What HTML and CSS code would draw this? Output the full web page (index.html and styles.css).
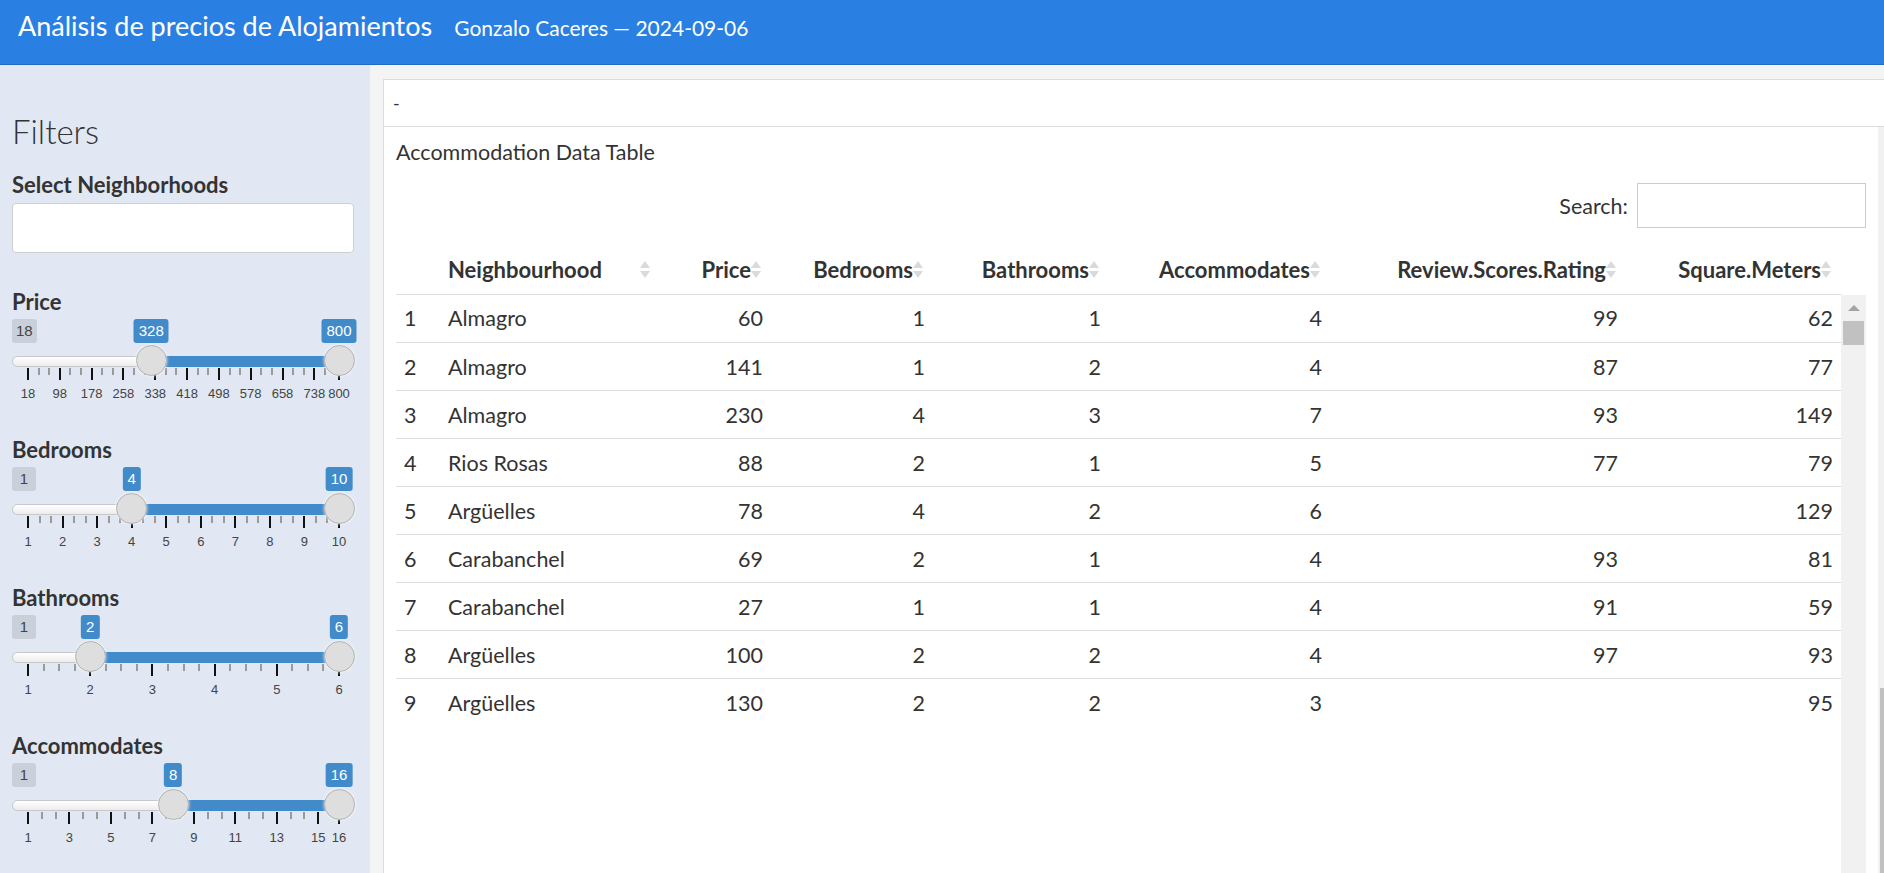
FILE: index.html
```html
<!DOCTYPE html>
<html lang="es">
<head>
<meta charset="utf-8">
<title>Análisis de precios de Alojamientos</title>
<link rel="stylesheet" href="styles.css">
</head>
<body>
<header class="topbar">
  <span class="app-title">Análisis de precios de Alojamientos</span>
  <span class="app-sub">Gonzalo Caceres — 2024-09-06</span>
</header>
<div class="layout">
  <aside class="sidebar">
    <h2 class="side-title">Filters</h2>
    <div class="field">
      <label class="field-label">Select Neighborhoods</label>
      <div class="select-box"></div>
    </div>

    <div class="field slider-field">
      <label class="field-label">Price</label>
      <div class="irs">
        <span class="irs-min">18</span>
        <div class="irs-line"></div>
        <div class="irs-scale">
          <i class="tk" style="left:0%"></i><i class="tk sm" style="left:3.410%"></i><i class="tk sm" style="left:6.820%"></i>
          <i class="tk" style="left:10.230%"></i><i class="tk sm" style="left:13.640%"></i><i class="tk sm" style="left:17.050%"></i>
          <i class="tk" style="left:20.460%"></i><i class="tk sm" style="left:23.870%"></i><i class="tk sm" style="left:27.280%"></i>
          <i class="tk" style="left:30.691%"></i><i class="tk sm" style="left:34.101%"></i><i class="tk sm" style="left:37.511%"></i>
          <i class="tk" style="left:40.921%"></i><i class="tk sm" style="left:44.331%"></i><i class="tk sm" style="left:47.741%"></i>
          <i class="tk" style="left:51.151%"></i><i class="tk sm" style="left:54.561%"></i><i class="tk sm" style="left:57.971%"></i>
          <i class="tk" style="left:61.381%"></i><i class="tk sm" style="left:64.791%"></i><i class="tk sm" style="left:68.201%"></i>
          <i class="tk" style="left:71.611%"></i><i class="tk sm" style="left:75.021%"></i><i class="tk sm" style="left:78.431%"></i>
          <i class="tk" style="left:81.841%"></i><i class="tk sm" style="left:85.251%"></i><i class="tk sm" style="left:88.662%"></i>
          <i class="tk" style="left:92.072%"></i><i class="tk sm" style="left:95.482%"></i>
          <i class="tk" style="left:100%"></i>
          <b class="tl" style="left:0%">18</b><b class="tl" style="left:10.230%">98</b><b class="tl" style="left:20.460%">178</b>
          <b class="tl" style="left:30.691%">258</b><b class="tl" style="left:40.921%">338</b><b class="tl" style="left:51.151%">418</b>
          <b class="tl" style="left:61.381%">498</b><b class="tl" style="left:71.611%">578</b><b class="tl" style="left:81.841%">658</b>
          <b class="tl" style="left:92.072%">738</b><b class="tl" style="left:100%">800</b>
          <div class="irs-bar" style="left:39.642%;width:60.358%"></div>
          <span class="irs-handle" style="left:39.642%"></span>
          <span class="irs-handle" style="left:100%"></span>
          <span class="irs-bubble" style="left:39.642%">328</span>
          <span class="irs-bubble" style="left:100%">800</span>
        </div>
      </div>
    </div>

    <div class="field slider-field">
      <label class="field-label">Bedrooms</label>
      <div class="irs">
        <span class="irs-min">1</span>
        <div class="irs-line"></div>
        <div class="irs-scale">
          <i class="tk" style="left:0%"></i><i class="tk sm" style="left:3.704%"></i><i class="tk sm" style="left:7.407%"></i>
          <i class="tk" style="left:11.111%"></i><i class="tk sm" style="left:14.815%"></i><i class="tk sm" style="left:18.519%"></i>
          <i class="tk" style="left:22.222%"></i><i class="tk sm" style="left:25.926%"></i><i class="tk sm" style="left:29.630%"></i>
          <i class="tk" style="left:33.333%"></i><i class="tk sm" style="left:37.037%"></i><i class="tk sm" style="left:40.741%"></i>
          <i class="tk" style="left:44.444%"></i><i class="tk sm" style="left:48.148%"></i><i class="tk sm" style="left:51.852%"></i>
          <i class="tk" style="left:55.556%"></i><i class="tk sm" style="left:59.259%"></i><i class="tk sm" style="left:62.963%"></i>
          <i class="tk" style="left:66.667%"></i><i class="tk sm" style="left:70.370%"></i><i class="tk sm" style="left:74.074%"></i>
          <i class="tk" style="left:77.778%"></i><i class="tk sm" style="left:81.481%"></i><i class="tk sm" style="left:85.185%"></i>
          <i class="tk" style="left:88.889%"></i><i class="tk sm" style="left:92.593%"></i><i class="tk sm" style="left:96.296%"></i>
          <i class="tk" style="left:100%"></i>
          <b class="tl" style="left:0%">1</b><b class="tl" style="left:11.111%">2</b><b class="tl" style="left:22.222%">3</b>
          <b class="tl" style="left:33.333%">4</b><b class="tl" style="left:44.444%">5</b><b class="tl" style="left:55.556%">6</b>
          <b class="tl" style="left:66.667%">7</b><b class="tl" style="left:77.778%">8</b><b class="tl" style="left:88.889%">9</b>
          <b class="tl" style="left:100%">10</b>
          <div class="irs-bar" style="left:33.333%;width:66.667%"></div>
          <span class="irs-handle" style="left:33.333%"></span>
          <span class="irs-handle" style="left:100%"></span>
          <span class="irs-bubble" style="left:33.333%">4</span>
          <span class="irs-bubble" style="left:100%">10</span>
        </div>
      </div>
    </div>

    <div class="field slider-field">
      <label class="field-label">Bathrooms</label>
      <div class="irs">
        <span class="irs-min">1</span>
        <div class="irs-line"></div>
        <div class="irs-scale">
          <i class="tk" style="left:0%"></i><i class="tk sm" style="left:5%"></i><i class="tk sm" style="left:10%"></i><i class="tk sm" style="left:15%"></i>
          <i class="tk" style="left:20%"></i><i class="tk sm" style="left:25%"></i><i class="tk sm" style="left:30%"></i><i class="tk sm" style="left:35%"></i>
          <i class="tk" style="left:40%"></i><i class="tk sm" style="left:45%"></i><i class="tk sm" style="left:50%"></i><i class="tk sm" style="left:55%"></i>
          <i class="tk" style="left:60%"></i><i class="tk sm" style="left:65%"></i><i class="tk sm" style="left:70%"></i><i class="tk sm" style="left:75%"></i>
          <i class="tk" style="left:80%"></i><i class="tk sm" style="left:85%"></i><i class="tk sm" style="left:90%"></i><i class="tk sm" style="left:95%"></i>
          <i class="tk" style="left:100%"></i>
          <b class="tl" style="left:0%">1</b><b class="tl" style="left:20%">2</b><b class="tl" style="left:40%">3</b>
          <b class="tl" style="left:60%">4</b><b class="tl" style="left:80%">5</b><b class="tl" style="left:100%">6</b>
          <div class="irs-bar" style="left:20%;width:80%"></div>
          <span class="irs-handle" style="left:20%"></span>
          <span class="irs-handle" style="left:100%"></span>
          <span class="irs-bubble" style="left:20%">2</span>
          <span class="irs-bubble" style="left:100%">6</span>
        </div>
      </div>
    </div>

    <div class="field slider-field last">
      <label class="field-label">Accommodates</label>
      <div class="irs">
        <span class="irs-min">1</span>
        <div class="irs-line"></div>
        <div class="irs-scale">
          <i class="tk" style="left:0%"></i><i class="tk sm" style="left:4.444%"></i><i class="tk sm" style="left:8.889%"></i>
          <i class="tk" style="left:13.333%"></i><i class="tk sm" style="left:17.778%"></i><i class="tk sm" style="left:22.222%"></i>
          <i class="tk" style="left:26.667%"></i><i class="tk sm" style="left:31.111%"></i><i class="tk sm" style="left:35.556%"></i>
          <i class="tk" style="left:40%"></i><i class="tk sm" style="left:44.444%"></i><i class="tk sm" style="left:48.889%"></i>
          <i class="tk" style="left:53.333%"></i><i class="tk sm" style="left:57.778%"></i><i class="tk sm" style="left:62.222%"></i>
          <i class="tk" style="left:66.667%"></i><i class="tk sm" style="left:71.111%"></i><i class="tk sm" style="left:75.556%"></i>
          <i class="tk" style="left:80%"></i><i class="tk sm" style="left:84.444%"></i><i class="tk sm" style="left:88.889%"></i>
          <i class="tk" style="left:93.333%"></i>
          <i class="tk" style="left:100%"></i>
          <b class="tl" style="left:0%">1</b><b class="tl" style="left:13.333%">3</b><b class="tl" style="left:26.667%">5</b>
          <b class="tl" style="left:40%">7</b><b class="tl" style="left:53.333%">9</b><b class="tl" style="left:66.667%">11</b>
          <b class="tl" style="left:80%">13</b><b class="tl" style="left:93.333%">15</b><b class="tl" style="left:100%">16</b>
          <div class="irs-bar" style="left:46.667%;width:53.333%"></div>
          <span class="irs-handle" style="left:46.667%"></span>
          <span class="irs-handle" style="left:100%"></span>
          <span class="irs-bubble" style="left:46.667%">8</span>
          <span class="irs-bubble" style="left:100%">16</span>
        </div>
      </div>
    </div>
  </aside>

  <main class="main">
    <section class="card">
      <div class="card-header">-</div>
      <div class="card-body">
        <div class="card-content">
          <div class="tbl-caption">Accommodation Data Table</div>
          <div class="dt-search">
            <label for="q">Search:</label>
            <input id="q" class="search-input" type="search">
          </div>
          <div class="dt-head">
            <table class="dt">
              <colgroup>
                <col class="c-idx"><col class="c-nb"><col class="c-price"><col class="c-bed"><col class="c-bath"><col class="c-acc"><col class="c-rev"><col class="c-sqm">
              </colgroup>
              <thead>
                <tr>
                  <th></th>
                  <th class="left"><span class="th-in spread"><span>Neighbourhood</span><span class="sort"></span></span></th>
                  <th><span class="th-in"><span>Price</span><span class="sort"></span></span></th>
                  <th><span class="th-in"><span>Bedrooms</span><span class="sort"></span></span></th>
                  <th><span class="th-in"><span>Bathrooms</span><span class="sort"></span></span></th>
                  <th><span class="th-in"><span>Accommodates</span><span class="sort"></span></span></th>
                  <th><span class="th-in"><span>Review.Scores.Rating</span><span class="sort"></span></span></th>
                  <th><span class="th-in"><span>Square.Meters</span><span class="sort"></span></span></th>
                </tr>
              </thead>
            </table>
          </div>
          <div class="dt-body">
            <table class="dt">
              <colgroup>
                <col class="c-idx"><col class="c-nb"><col class="c-price"><col class="c-bed"><col class="c-bath"><col class="c-acc"><col class="c-rev"><col class="c-sqm">
              </colgroup>
              <tbody>
                <tr><td class="left">1</td><td class="left">Almagro</td><td>60</td><td>1</td><td>1</td><td>4</td><td>99</td><td>62</td></tr>
                <tr><td class="left">2</td><td class="left">Almagro</td><td>141</td><td>1</td><td>2</td><td>4</td><td>87</td><td>77</td></tr>
                <tr><td class="left">3</td><td class="left">Almagro</td><td>230</td><td>4</td><td>3</td><td>7</td><td>93</td><td>149</td></tr>
                <tr><td class="left">4</td><td class="left">Rios Rosas</td><td>88</td><td>2</td><td>1</td><td>5</td><td>77</td><td>79</td></tr>
                <tr><td class="left">5</td><td class="left">Argüelles</td><td>78</td><td>4</td><td>2</td><td>6</td><td></td><td>129</td></tr>
                <tr><td class="left">6</td><td class="left">Carabanchel</td><td>69</td><td>2</td><td>1</td><td>4</td><td>93</td><td>81</td></tr>
                <tr><td class="left">7</td><td class="left">Carabanchel</td><td>27</td><td>1</td><td>1</td><td>4</td><td>91</td><td>59</td></tr>
                <tr><td class="left">8</td><td class="left">Argüelles</td><td>100</td><td>2</td><td>2</td><td>4</td><td>97</td><td>93</td></tr>
                <tr class="last"><td class="left">9</td><td class="left">Argüelles</td><td>130</td><td>2</td><td>2</td><td>3</td><td></td><td>95</td></tr>
              </tbody>
            </table>
            <div class="vscroll">
              <span class="vscroll-up"></span>
              <span class="vscroll-thumb"></span>
            </div>
          </div>
        </div>
        <div class="page-scroll"><span class="page-thumb"></span></div>
      </div>
    </section>
  </main>
</div>
</body>
</html>
```

FILE: styles.css
```css
* { box-sizing: border-box; margin: 0; padding: 0; }

html, body { height: 100%; }

body {
  font-family: Lato, "Noto Sans", sans-serif;
  color: #333;
  background: #f4f4f4;
  overflow: hidden;
  display: flex;
  flex-direction: column;
}

/* ---------- top bar ---------- */
.topbar {
  flex: none;
  height: 65px;
  background: #2a80e2;
  border-bottom: 1px solid #1f6cc4;
  color: #fff;
  display: flex;
  align-items: baseline;
  gap: 22px;
  padding: 11px 0 0 18px;
}
.app-title { font-size: 27px; line-height: 30px; }
.app-sub { font-size: 21px; line-height: 24px; }

/* ---------- layout ---------- */
.layout { flex: 1; display: flex; min-height: 0; overflow: hidden; }

.sidebar {
  flex: none;
  width: 370px;
  background: #e1e8f3;
  padding: 46px 16px 0 12px;
  overflow: hidden;
}
.side-title {
  font-weight: 300;
  font-size: 33px;
  line-height: 41px;
  margin-bottom: 20px;
  color: #333;
}
.field { margin-bottom: 36px; }
.field-label {
  display: block;
  font-weight: 700;
  font-size: 22px;
  line-height: 25px;
  margin-bottom: 6px;
}
.select-box {
  height: 50px;
  background: #fff;
  border: 1px solid #cfcfcf;
  border-radius: 4px;
}
.slider-field { margin-bottom: 33px; }
.slider-field.last { margin-bottom: 0; }
.slider-field .field-label { margin-bottom: 5px; }

/* ---------- range slider ---------- */
.irs { position: relative; height: 85px; }
.irs-min {
  position: absolute;
  left: 0; top: 0;
  height: 24px;
  line-height: 24px;
  padding: 0 4px;
  min-width: 24px;
  text-align: center;
  background: rgba(0, 0, 0, 0.1);
  border-radius: 3px;
  font-family: "Liberation Sans", Arial, sans-serif;
  font-size: 15px;
  color: #444;
}
.irs-line {
  position: absolute;
  left: 0; right: 0;
  top: 37px;
  height: 11px;
  border: 1px solid #c8c8c8;
  border-radius: 6px;
  background: linear-gradient(#ffffff, #ececec);
}
.irs-scale {
  position: absolute;
  left: 16px; right: 15px;
  top: 0; bottom: 0;
}
.irs-bar {
  position: absolute;
  top: 37px;
  height: 11px;
  background: #428bca;
}
.irs-handle {
  position: absolute;
  top: 26px;
  width: 31px; height: 31px;
  margin-left: -15.5px;
  border-radius: 50%;
  background: #dedede;
  border: 1px solid #b3b3b3;
  box-shadow: 0 0 3px rgba(255,255,255,0.8);
}
.irs-bubble {
  position: absolute;
  top: 0;
  height: 24px;
  line-height: 24px;
  padding: 0 5px;
  transform: translateX(-50%);
  background: #428bca;
  color: #fff;
  border-radius: 3px;
  font-family: "Liberation Sans", Arial, sans-serif;
  font-size: 15px;
  white-space: nowrap;
}
.tk {
  position: absolute;
  top: 49px;
  width: 2px;
  height: 12px;
  margin-left: -1px;
  background: #111;
}
.tk.sm { height: 7px; background: #9a9a9a; }
.tl {
  position: absolute;
  top: 67px;
  transform: translateX(-50%);
  font-family: "Liberation Sans", Arial, sans-serif;
  font-weight: 400;
  font-size: 13px;
  line-height: 16px;
  color: #444;
  white-space: nowrap;
}

/* ---------- main ---------- */
.main {
  flex: 1;
  min-width: 0;
  padding: 14px 0 0 13px;
  display: flex;
}
.card {
  flex: 1;
  min-width: 0;
  background: #fff;
  border: 1px solid #dcdcdc;
  border-right: none;
  border-bottom: none;
  display: flex;
  flex-direction: column;
}
.card-header {
  flex: none;
  height: 47px;
  line-height: 46px;
  padding: 0 9px;
  font-size: 18px;
  border-bottom: 1px solid #dcdcdc;
}
.card-body { flex: 1; display: flex; min-height: 0; }
.card-content {
  flex: 1;
  min-width: 0;
  padding: 12px 12px 0 12px;
  display: flex;
  flex-direction: column;
}
.tbl-caption { font-size: 21.5px; line-height: 26px; }
.dt-search {
  margin-top: 18px;
  display: flex;
  justify-content: flex-end;
  align-items: center;
  gap: 9px;
  font-size: 21.5px;
}
.search-input {
  width: 229px;
  height: 45px;
  border: 1px solid #cccccc;
  background: #fff;
  border-radius: 0;
  outline: none;
  font: inherit;
}
.dt-head { margin-top: 17px; }
.dt {
  width: 1445px;
  border-collapse: collapse;
  table-layout: fixed;
  font-size: 21.5px;
}
.c-idx { width: 44px; }
.c-nb { width: 220px; }
.c-price { width: 111px; }
.c-bed { width: 162px; }
.c-bath { width: 176px; }
.c-acc { width: 221px; }
.c-rev { width: 296px; }
.c-sqm { width: 215px; }

.dt th {
  height: 49px;
  padding: 0 10px 0 8px;
  text-align: right;
  font-weight: 700;
  font-size: 22px;
  border-bottom: 1px solid #dcdcdc;
  white-space: nowrap;
}
.dt th.left { text-align: left; }
.th-in { display: inline-flex; align-items: center; }
.th-in.spread { display: flex; justify-content: space-between; }
.sort {
  display: inline-block;
  width: 10px;
  height: 17px;
  position: relative;
}
.sort::before, .sort::after {
  content: "";
  position: absolute;
  left: 0;
  border-left: 5px solid transparent;
  border-right: 5px solid transparent;
}
.sort::before { top: 0; border-bottom: 7px solid #dadada; }
.sort::after { bottom: 0; border-top: 7px solid #dadada; }

.dt-body { flex: 1; display: flex; min-height: 0; align-items: stretch; }
.dt-body .dt { align-self: flex-start; }
.dt td {
  height: 48px;
  padding: 0 8px;
  text-align: right;
  border-bottom: 1px solid #dcdcdc;
}
.dt td.left { text-align: left; }
.dt tr.last td { border-bottom: none; }

.vscroll {
  width: 25px;
  flex: none;
  background: #f1f1f1;
  display: flex;
  flex-direction: column;
  align-items: center;
  padding-top: 10px;
}
.vscroll-up {
  width: 0; height: 0;
  border-left: 6px solid transparent;
  border-right: 6px solid transparent;
  border-bottom: 6px solid #a3a3a3;
}
.vscroll-thumb {
  margin-top: 10px;
  width: 21px;
  height: 24px;
  background: #c1c1c1;
}

.page-scroll {
  flex: none;
  width: 6px;
  background: #f1f1f1;
  padding-left: 2px;
  display: flex;
  flex-direction: column;
}
.page-thumb {
  display: block;
  margin-top: 561px;
  flex: 1;
  background: #c1c1c1;
}
```
